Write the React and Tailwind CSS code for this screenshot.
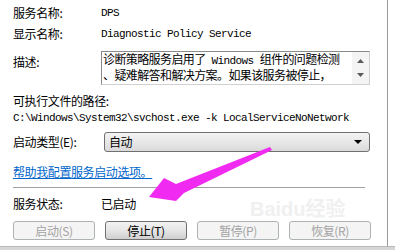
const mono = "font-['Liberation_Mono',monospace] text-[11px] tracking-[-0.6px]"

function Row({ label, children, className = '' }) {
  return (
    <div className={`flex items-center ${className}`}>
      <div className="w-[88px] shrink-0">{label}</div>
      {children}
    </div>
  )
}

function Btn({ children, enabled }) {
  return enabled ? (
    <button className="h-[19px] w-[82px] rounded-[3px] border border-[#707070] bg-gradient-to-b from-[#f2f2f2] via-[#e6e6e6] to-[#cfcfcf] text-[12px] leading-[16px] text-black">
      {children}
    </button>
  ) : (
    <button className="h-[19px] w-[82px] rounded-[3px] border border-[#adb2b5] bg-[#f4f4f4] text-[12px] leading-[16px] text-[#a3a3a3]">
      {children}
    </button>
  )
}

export default function App() {
  return (
    <div className="relative flex h-[250px] w-[395px] flex-col overflow-hidden bg-white font-['Noto_Sans_CJK_SC',sans-serif] text-[12px] leading-[16px] tracking-[-0.4px] text-black">
      <div className="pointer-events-none absolute left-[250px] top-[199px] font-['Liberation_Sans',sans-serif] text-[20px] font-bold leading-[18px] tracking-normal text-[#f0f0f0]">
        Baidu<span className="font-['Noto_Sans_CJK_SC',sans-serif]">经验</span>
      </div>

      <div className="relative flex flex-1">
        <div className="w-[388px] border-r border-[#9a9a9a] pl-[13px] pt-[5px]">
          <Row label="服务名称:">
            <span className={mono}>DPS</span>
          </Row>
          <Row label="显示名称:" className="mt-[5px]">
            <span className={mono}>Diagnostic Policy Service</span>
          </Row>
          <div className="mt-[9px] flex">
            <div className="w-[88px] shrink-0 pt-[3px]">描述:</div>
            <div className="flex h-[34px] w-[269px] border border-t-[#8a8a8a] border-l-[#8a8a8a] border-r-[#d0d0d0] border-b-[#d0d0d0]">
              <div className="flex-1 whitespace-nowrap pl-[1px] leading-[13px] tracking-[-0.6px]">
                <div>
                  诊断策略服务启用了<span className={mono}> Windows </span>组件的问题检测
                </div>
                <div>、疑难解答和解决方案。如果该服务被停止，</div>
              </div>
              <div className="flex w-[17px] flex-col items-center justify-between bg-[#f4f4f4] py-[7px]">
                <svg width="7" height="4" viewBox="0 0 7 4">
                  <path d="M0 4 L3.5 0 L7 4 Z" fill="#5a5a5a" />
                </svg>
                <svg width="7" height="4" viewBox="0 0 7 4">
                  <path d="M0 0 L7 0 L3.5 4 Z" fill="#5a5a5a" />
                </svg>
              </div>
            </div>
          </div>
          <div className="mt-[8px]">可执行文件的路径:</div>
          <div className={`mt-[1px] whitespace-nowrap ${mono}`}>
            C:\Windows\System32\svchost.exe -k LocalServiceNoNetwork
          </div>
          <Row label="启动类型(E):" className="mt-[6px]">
            <div className="ml-[3px] flex h-[20px] w-[266px] items-center justify-between rounded-[3px] border border-[#707070] bg-gradient-to-b from-[#f4f4f4] to-[#dadada] pl-[4px] pr-[7px]">
              <span>自动</span>
              <svg width="8" height="4" viewBox="0 0 8 4">
                <path d="M0 0 L8 0 L4 4 Z" fill="#000" />
              </svg>
            </div>
          </Row>
          <div className="mt-[12px] text-[#0066cc] underline">帮助我配置服务启动选项。</div>
          <div className="mt-[7px] mr-[22px] h-px bg-[#a0a0a0]" />
          <Row label="服务状态:" className="mt-[8px]">
            <span>已启动</span>
          </Row>
          <div className="mt-[9px] flex gap-[10px]">
            <Btn>启动(S)</Btn>
            <Btn enabled>停止(T)</Btn>
            <Btn>暂停(P)</Btn>
            <Btn>恢复(R)</Btn>
          </div>
        </div>
      </div>
      <div className="h-[4px] border-t border-[#b8b8b8] bg-[#d6d6d6]" />

      <svg className="pointer-events-none absolute left-0 top-0" width="395" height="250">
        <polygon
          points="149,197 164,178 176,184 270,147 272,150 184,193 176,201"
          fill="#f02af0"
        />
      </svg>
    </div>
  )
}
